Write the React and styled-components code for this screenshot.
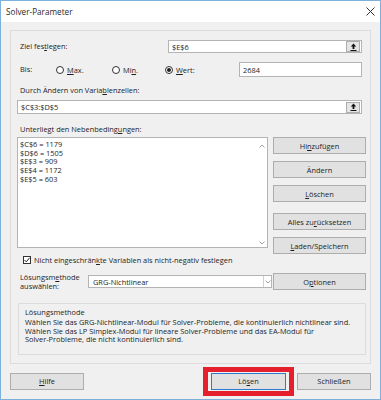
import React from 'react';
import styled, { createGlobalStyle } from 'styled-components';

const Global = createGlobalStyle`
  html, body { margin: 0; padding: 0; background: #ffffff; }
  * { box-sizing: border-box; }
  body {
    font-family: "Open Sans", "Noto Sans", sans-serif;
    font-size: 7.4px;
    color: #1e1e1e;
  }
`;

const Window = styled.div`
  width: 381px;
  height: 400px;
  border: 1px solid #7fb0dc;
  background: #f0f0f0;
  display: flex;
  flex-direction: column;
`;

const TitleBar = styled.div`
  height: 21px;
  background: #ffffff;
  display: flex;
  align-items: center;
  justify-content: space-between;
  padding: 0 5px 0 5px;
  font-size: 8.2px;
  color: #2a2a2a;
`;

const Body = styled.div`
  padding: 8px 9px 0;
  display: flex;
  flex-direction: column;
`;

const Panel = styled.div`
  height: 334px;
  border: 1px solid #dcdcdc;
  padding: 9px 4px 0 6px;
  display: flex;
  flex-direction: column;
`;

const Row = styled.div`
  display: flex;
  align-items: center;
  height: ${(p) => p.h || 13}px;
  margin-top: ${(p) => p.mt || 0}px;
  margin-right: ${(p) => p.mr || 0}px;
`;

const Label = styled.div`
  width: ${(p) => (p.w ? `${p.w}px` : 'auto')};
  padding-left: 3px;
  flex: none;
  line-height: ${(p) => p.lh || 11}px;
  margin-top: ${(p) => p.mt || 0}px;
  white-space: nowrap;
`;

const Input = styled.div`
  width: ${(p) => (p.w ? `${p.w}px` : '100%')};
  height: ${(p) => p.h || 13}px;
  background: #ffffff;
  border: 1px solid #b4b4b4;
  display: flex;
  align-items: center;
  justify-content: space-between;
  padding-left: 3px;
  padding-right: 1px;
  margin-top: ${(p) => p.mt || 0}px;
  flex: none;
`;

const RefButton = styled.div`
  width: 14px;
  height: 11px;
  background: #e5e5e5;
  border: 1px solid #adadad;
  display: flex;
  align-items: center;
  justify-content: center;
`;

const RadioOption = styled.div`
  width: ${(p) => p.w}px;
  display: flex;
  align-items: center;
  gap: 3px;
  flex: none;
`;

const RadioCircle = styled.span`
  width: 8px;
  height: 8px;
  border-radius: 50%;
  border: 1px solid #333333;
  background: #ffffff;
  display: flex;
  align-items: center;
  justify-content: center;
  &::after {
    content: '';
    width: 4px;
    height: 4px;
    border-radius: 50%;
    background: ${(p) => (p.checked ? '#222222' : 'transparent')};
  }
`;

const ListSection = styled.div`
  display: flex;
  gap: 5px;
  height: 116px;
  margin-top: 2px;
`;

const ListBox = styled.div`
  width: 251px;
  height: 111px;
  background: #ffffff;
  border: 1px solid #b4b4b4;
  display: flex;
  justify-content: space-between;
  padding: 2px 0 0 2px;
`;

const ListLines = styled.div`
  line-height: 8.7px;
`;

const ScrollTrack = styled.div`
  width: 10px;
  display: flex;
  flex-direction: column;
  justify-content: space-between;
  align-items: center;
  padding: 4px 0 2px;
`;

const ButtonColumn = styled.div`
  width: 93px;
  display: flex;
  flex-direction: column;
`;

const Button = styled.div`
  width: ${(p) => (p.w ? `${p.w}px` : '100%')};
  height: 17px;
  flex: none;
  margin-top: ${(p) => p.mt || 0}px;
  background: #e1e1e1;
  border: 1px solid ${(p) => (p.primary ? '#2b7bd0' : '#adadad')};
  display: flex;
  align-items: center;
  justify-content: center;
  color: #1e1e1e;
`;

const CheckRow = styled.div`
  display: flex;
  align-items: center;
  gap: 3px;
  height: 8px;
  margin-top: 3px;
  padding-left: 6px;
`;

const CheckBox = styled.span`
  width: 8px;
  height: 8px;
  border: 1px solid #333333;
  background: #ffffff;
  display: flex;
  align-items: center;
  justify-content: center;
`;

const Select = styled.div`
  width: 184px;
  height: 13px;
  background: #ffffff;
  border: 1px solid #b4b4b4;
  display: flex;
  align-items: center;
  justify-content: space-between;
  padding-left: 4px;
  margin-right: 1px;
`;

const SelectArrow = styled.div`
  width: 8px;
  height: 100%;
  border-left: 1px solid #d0d0d0;
  display: flex;
  align-items: center;
  justify-content: center;
`;

const GroupBox = styled.div`
  width: 348px;
  height: 52px;
  margin: 13px 0 0 1px;
  border: 1px solid #dcdcdc;
  padding: 4px 6px;
`;

const GroupTitle = styled.div`
  line-height: 9px;
`;

const GroupText = styled.div`
  line-height: 8.7px;
  margin-top: 1px;
`;

const Footer = styled.div`
  display: flex;
  align-items: center;
  height: 30px;
  margin-top: 2px;
`;

const Spacer = styled.div`
  flex: 1;
`;

const Highlight = styled.div`
  border: 5px solid #e51f2b;
  padding: 1px 3px;
  margin-right: 3px;
`;

const U = styled.span`
  text-decoration: underline;
  text-underline-offset: 1px;
`;

const UpIcon = () => (
  <svg width="7" height="8" viewBox="0 0 7 8">
    <path d="M3.5 0.5 L0.8 3.6 H2.6 V6 H4.4 V3.6 H6.2 Z" fill="#111" />
    <rect x="0.5" y="7" width="6" height="1" fill="#111" />
  </svg>
);

const CloseIcon = () => (
  <svg width="9" height="9" viewBox="0 0 9 9">
    <path d="M0.5 0.5 L8.5 8.5 M8.5 0.5 L0.5 8.5" stroke="#333" strokeWidth="1" />
  </svg>
);

const Chevron = ({ dir }) => (
  <svg width="6" height="4" viewBox="0 0 6 4">
    <path
      d={dir === 'up' ? 'M0.5 3.5 L3 1 L5.5 3.5' : 'M0.5 0.5 L3 3 L5.5 0.5'}
      stroke="#a0a0a0"
      strokeWidth="1"
      fill="none"
    />
  </svg>
);

const CheckMark = () => (
  <svg width="6" height="6" viewBox="0 0 6 6">
    <path d="M0.5 3 L2.3 4.8 L5.6 0.8" stroke="#222" strokeWidth="1" fill="none" />
  </svg>
);

const constraints = ['$C$6 = 1179', '$D$6 = 1505', '$E$3 = 909', '$E$4 = 1172', '$E$5 = 603'];

export default function App() {
  return (
    <>
      <Global />
      <Window>
        <TitleBar>
          <span>Solver-Parameter</span>
          <CloseIcon />
        </TitleBar>
        <Body>
          <Panel>
            <Row h={13} mr={4}>
              <Label w={151}>
                Ziel fes<U>t</U>legen:
              </Label>
              <Input w={194}>
                <span>$E$6</span>
                <RefButton>
                  <UpIcon />
                </RefButton>
              </Input>
            </Row>

            <Row h={15} mt={9} mr={4}>
              <Label w={39}>Bis:</Label>
              <RadioOption w={56}>
                <RadioCircle />
                <span>
                  <U>M</U>ax.
                </span>
              </RadioOption>
              <RadioOption w={53}>
                <RadioCircle />
                <span>
                  Mi<U>n</U>.
                </span>
              </RadioOption>
              <RadioOption w={74}>
                <RadioCircle checked />
                <span>
                  <U>W</U>ert:
                </span>
              </RadioOption>
              <Input w={123} h={15}>
                <span>2684</span>
              </Input>
            </Row>

            <Label mt={8}>
              Durch Ändern von Varia<U>b</U>lenzellen:
            </Label>
            <Row h={14} mt={4} mr={4}>
              <Input h={14}>
                <span>$C$3:$D$5</span>
                <RefButton>
                  <UpIcon />
                </RefButton>
              </Input>
            </Row>

            <Label mt={10}>
              Unterliegt den Nebenbeding<U>u</U>ngen:
            </Label>
            <ListSection>
              <ListBox>
                <ListLines>
                  {constraints.map((c) => (
                    <div key={c}>{c}</div>
                  ))}
                </ListLines>
                <ScrollTrack>
                  <Chevron dir="up" />
                  <Chevron dir="down" />
                </ScrollTrack>
              </ListBox>
              <ButtonColumn>
                <Button>
                  Hi<U>n</U>zufügen
                </Button>
                <Button mt={7}>Ändern</Button>
                <Button mt={7}>
                  <U>L</U>öschen
                </Button>
                <Button mt={11}>
                  Alles zu<U>r</U>ücksetzen
                </Button>
                <Button mt={7}>
                  <U>L</U>aden/Speichern
                </Button>
              </ButtonColumn>
            </ListSection>

            <CheckRow>
              <CheckBox>
                <CheckMark />
              </CheckBox>
              <span>
                Nicht eingeschrän<U>k</U>te Variablen als nicht-negativ festlegen
              </span>
            </CheckRow>

            <Row h={17} mt={9}>
              <Label w={71} lh={8.5}>
                Lösungsm<U>e</U>thode
                <br />
                auswählen:
              </Label>
              <Select>
                <span>GRG-Nichtlinear</span>
                <SelectArrow>
                  <Chevron dir="down" />
                </SelectArrow>
              </Select>
              <Button w={93}>
                O<U>p</U>tionen
              </Button>
            </Row>

            <GroupBox>
              <GroupTitle>Lösungsmethode</GroupTitle>
              <GroupText>
                Wählen Sie das GRG-Nichtlinear-Modul für Solver-Probleme, die kontinuierlich nichtlinear sind.
                <br />
                Wählen Sie das LP Simplex-Modul für lineare Solver-Probleme und das EA-Modul für
                <br />
                Solver-Probleme, die nicht kontinuierlich sind.
              </GroupText>
            </GroupBox>
          </Panel>

          <Footer>
            <Button w={74}>
              <U>H</U>ilfe
            </Button>
            <Spacer />
            <Highlight>
              <Button w={75} primary>
                Lö<U>s</U>en
              </Button>
            </Highlight>
            <Button w={74}>Schließen</Button>
          </Footer>
        </Body>
      </Window>
    </>
  );
}
